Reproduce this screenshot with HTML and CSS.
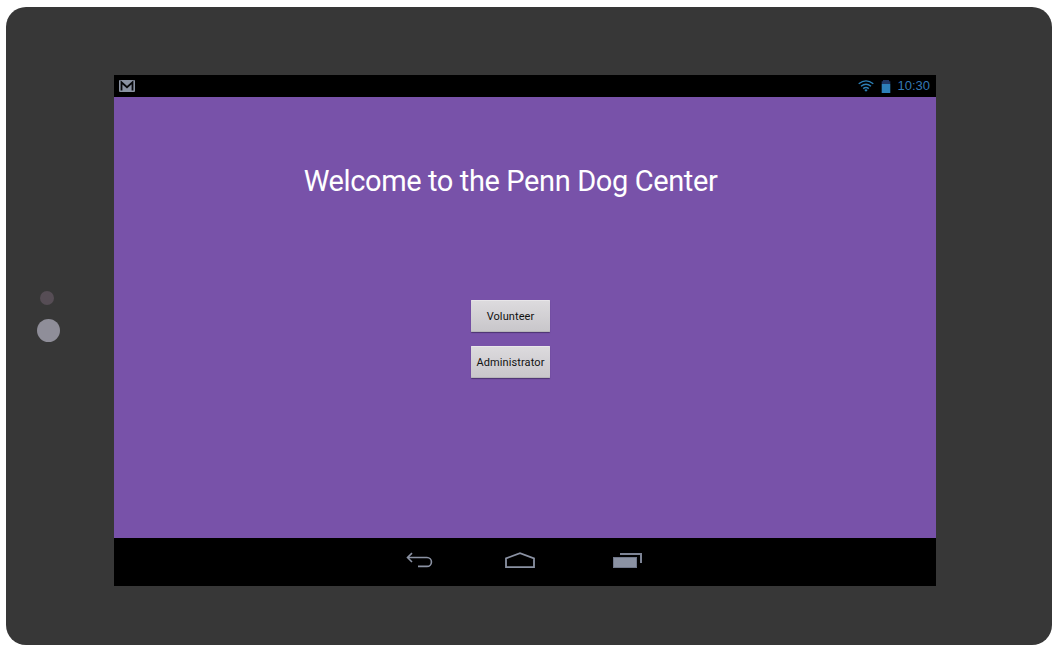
FILE: index.html
```html
<!DOCTYPE html>
<html lang="en">
<head>
<meta charset="utf-8">
<title>Penn Dog Center</title>
<link rel="stylesheet" href="styles.css">
</head>
<body>
<div class="tablet">
  <aside class="bezel">
    <span class="sensor"></span>
    <span class="camera"></span>
  </aside>
  <div class="screen">
    <header class="status">
      <svg class="mail" width="16" height="12" viewBox="0 0 16 12"><rect width="16" height="12" rx="1" fill="#8a92a2"/><path d="M2.5 10.5V2.3L8 7.2l5.5-4.9v8.2" fill="none" stroke="#07080b" stroke-width="1.8"/></svg>
      <svg class="wifi" width="16" height="12" viewBox="0 0 16 12"><g fill="none" stroke="#2d7fb5" stroke-width="1.4"><path d="M.7 3.8Q8-2 15.3 3.8M3 6.3Q8 2.2 13 6.3M5.2 8.6Q8 6.3 10.8 8.6"/></g><path d="M6.3 10Q8 8.7 9.7 10L8 11.8z" fill="#2d7fb5"/></svg>
      <svg class="battery" width="10" height="13" viewBox="0 0 10 13"><path d="M2 0h6v1.2h1.3V4H.7V1.2H2z" fill="#203866"/><path d="M.7 4h8.6v9H.7z" fill="#2d7fb9"/></svg>
      <span class="clock">10:30</span>
    </header>
    <main class="content">
      <h1 class="title">Welcome to the Penn Dog Center</h1>
      <button class="choice volunteer">Volunteer</button>
      <button class="choice admin">Administrator</button>
    </main>
    <nav class="navbar">
      <svg class="back" width="28" height="18" viewBox="0 0 28 18"><path d="M1.5 4.7H21a4.4 4.4 0 0 1 0 8.9H12M6 .3L1.5 4.7 6 9.2" transform="translate(0 .8)" fill="none" stroke="#8b92a3" stroke-width="1.6"/></svg>
      <svg class="home" width="30" height="17" viewBox="0 0 30 17"><path d="M1 15.1V6.4L15 1.2l14 5.2v8.7z" fill="none" stroke="#8b92a3" stroke-width="1.8"/></svg>
      <svg class="recent" width="30" height="16" viewBox="0 0 30 16"><path d="M0 4h24v11H0z" fill="#70778a"/><path d="M1 5h22v9H1z" fill="#8b92a3"/><path d="M7 1h21v9" fill="none" stroke="#7d8495" stroke-width="2"/></svg>
    </nav>
  </div>
</div>
</body>
</html>
```
FILE: styles.css
```css
* { box-sizing: border-box; }
body { margin: 0; padding: 7px 8px 9px 6px; height: 654px; background: #fff; overflow: hidden; font-family: Roboto, sans-serif; }
svg { display: block; flex: none; }
.tablet { display: flex; height: 638px; padding-top: 68px; background: #373737; border-radius: 20px; }
.bezel { width: 108px; padding: 216px 0 0 31px; flex: none; }
.sensor { display: block; width: 14px; height: 14px; margin-left: 3px; border-radius: 50%; background: #564d55; }
.camera { display: block; width: 23px; height: 23px; margin-top: 14px; border-radius: 50%; background: #8f8e99; }
.screen { display: flex; flex-direction: column; width: 822px; height: 511px; background: #000; }
.status { display: flex; align-items: center; height: 22px; padding: 0 6px 0 5px; }
.wifi { margin-left: auto; margin-right: 7px; }
.battery { margin-right: 6px; }
.clock { color: #3478b4; font: 13px/22px "Liberation Sans", sans-serif; }
.content { display: flex; flex-direction: column; align-items: center; height: 441px; padding: 64px 29px 0 0; background: #7852a9; }
.title { height: 40px; margin: 0 0 99px; color: #fff; font-size: 29px; font-weight: 400; line-height: 40px; letter-spacing: -.38px; white-space: nowrap; }
.choice { width: 79px; height: 32px; padding: 1px 0 0; border: 0; border-radius: 1px; background: linear-gradient(#dddbde, #c8c6ca); box-shadow: inset 0 1px #e8e6e9, inset 0 -1px #b7b5b9, 0 1px 1px #4c3470; color: #111; font: 11px/31px Roboto, sans-serif; letter-spacing: .1px; white-space: nowrap; }
.admin { margin-top: 14px; }
.navbar { display: flex; height: 48px; padding: 14px 0 0 292px; }
.home { margin-left: 71px; }
.recent { margin: 1px 0 0 78px; }
```
